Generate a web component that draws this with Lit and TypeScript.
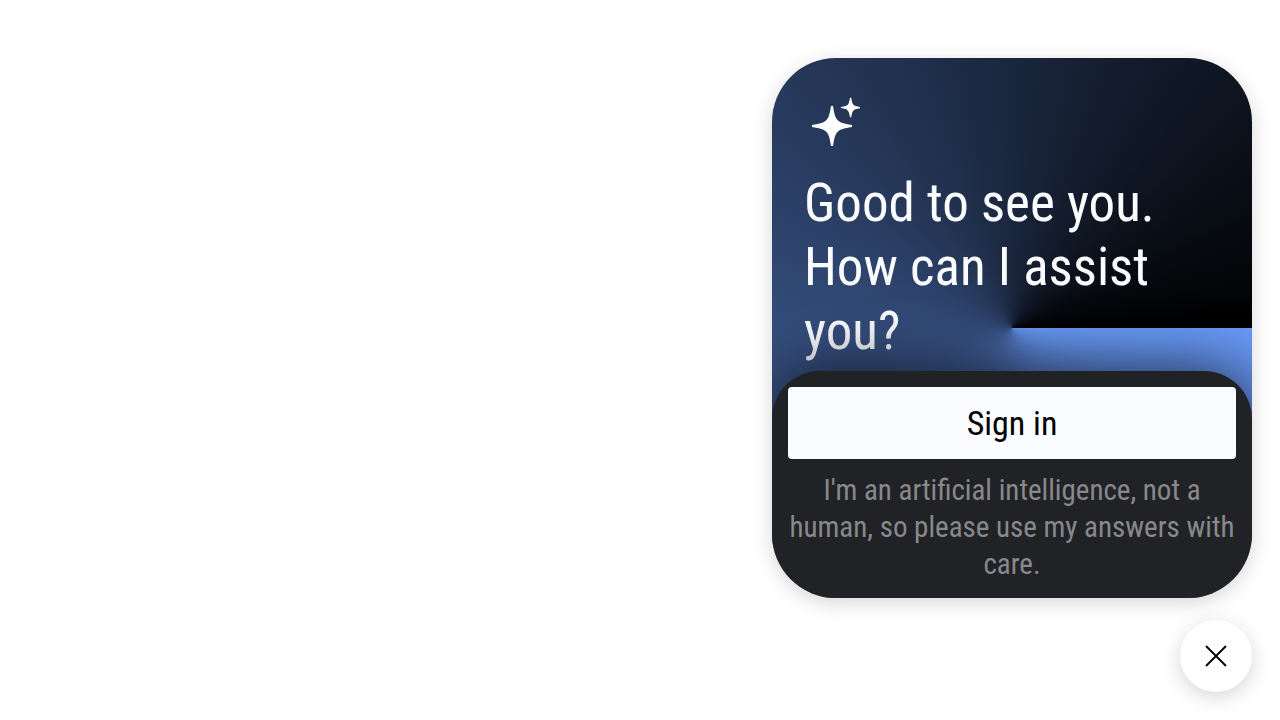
import { LitElement, html, css } from "lit";
import { customElement, state } from "lit/decorators.js";

@customElement("app-root")
export class AppRoot extends LitElement {
  static styles = css`
    :host {
      display: block;
      font-family: "Roboto Condensed", Roboto, "Liberation Sans", sans-serif;
    }
    * {
      box-sizing: border-box;
    }
    .page {
      min-height: 100vh;
      display: flex;
      flex-direction: column;
      align-items: flex-end;
      justify-content: flex-end;
      gap: 22px;
      padding: 28px;
      background: #fff;
    }
    .card {
      width: 100%;
      max-width: 480px;
      border-radius: 64px;
      overflow: hidden;
      background: conic-gradient(from 90deg, #6899f6, #000);
      box-shadow: 0 5px 20px rgba(0, 0, 0, 0.16);
    }
    .hero {
      padding: 36px 32px 8px;
    }
    .sparkle {
      display: block;
      width: 56px;
      height: 56px;
      fill: #fff;
    }
    .title {
      margin: 21px 0 0;
      font-size: 53px;
      line-height: 64px;
      font-weight: 400;
      color: #fbfcff;
    }
    .panel {
      position: relative;
      display: flex;
      flex-direction: column;
      gap: 13px;
      padding: 16px 16px 15px;
      border-radius: 48px 48px 0 0;
      background: #212225;
      box-shadow: 0 0 64px rgba(0, 0, 0, 0.75);
    }
    .sign-in {
      height: 72px;
      border: 0;
      border-radius: 4px;
      background: #fbfcff;
      color: #010205;
      font: inherit;
      font-size: 34px;
      cursor: pointer;
    }
    .note {
      margin: 0;
      font-size: 29px;
      line-height: 37px;
      text-align: center;
      color: #88898c;
    }
    .launcher {
      display: grid;
      place-items: center;
      width: 72px;
      height: 72px;
      padding: 0;
      border: 0;
      border-radius: 50%;
      background: #fff;
      box-shadow: 0 5px 20px rgba(0, 0, 0, 0.16);
      cursor: pointer;
    }
    .cross {
      width: 24px;
      height: 24px;
      fill: none;
      stroke: #010205;
      stroke-width: 1.8;
    }
  `;

  @state() private open = true;

  private toggle() {
    this.open = !this.open;
  }

  render() {
    return html`
      <main class="page">
        ${this.open
          ? html`<section class="card">
              <header class="hero">
                <svg class="sparkle" viewBox="0 0 56 56" aria-hidden="true">
                  <path d="M27 12h2c1.300 8.500 2.400 11.800 4.700 14.200 2.400 2.300 5.800 3.500 14.300 4.800v2c-8.500 1.300-11.900 2.500-14.300 4.800-2.300 2.400-3.400 5.700-4.700 14.200h-2c-1.300-8.500-2.400-11.800-4.700-14.200-2.400-2.300-5.800-3.500-14.300-4.800v-2c8.500-1.300 11.900-2.500 14.300-4.800 2.300-2.400 3.400-5.700 4.700-14.200z" />
                  <path d="M46 3.800h1.200c.7 4.200 1.200 5.900 2.300 7 1.200 1.100 2.700 1.600 6.800 2.200v1.100c-4.100.6-5.600 1.200-6.800 2.300-1.100 1.100-1.600 2.700-2.300 6.800h-1.200c-.7-4.100-1.200-5.700-2.300-6.800-1.200-1.100-2.700-1.700-6.800-2.300v-1.100c4.100-.6 5.600-1.100 6.800-2.200 1.100-1.100 1.600-2.800 2.300-7z" />
                </svg>
                <h1 class="title">Good to see you. How can I assist you?</h1>
              </header>
              <div class="panel">
                <button class="sign-in" type="button">Sign in</button>
                <p class="note">I'm an artificial intelligence, not a human, so please use my answers with care.</p>
              </div>
            </section>`
          : ""}
        <button class="launcher" type="button" aria-label="Close" @click=${this.toggle}>
          <svg class="cross" viewBox="0 0 24 24" aria-hidden="true">
            <path d="M2 2 22 22M22 2 2 22" />
          </svg>
        </button>
      </main>
    `;
  }
}
